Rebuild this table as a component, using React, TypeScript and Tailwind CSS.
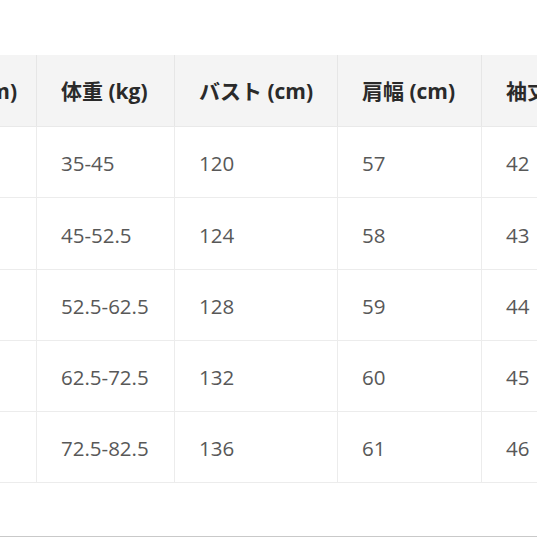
const headers = ["身長 (cm)", "体重 (kg)", "バスト (cm)", "肩幅 (cm)", "袖丈 (cm)"];

const rows = [
  ["150", "35-45", "120", "57", "42"],
  ["155", "45-52.5", "124", "58", "43"],
  ["160", "52.5-62.5", "128", "59", "44"],
  ["165", "62.5-72.5", "132", "60", "45"],
  ["170", "72.5-82.5", "136", "61", "46"],
];

const rowHeights = ["h-[71px]", "h-[72px]", "h-[71px]", "h-[71px]", "h-[71px]"];

const cols = "grid grid-cols-[137px_138px_163px_144px_160px]";

export default function App() {
  return (
    <div
      className="flex h-[537px] w-[537px] flex-col overflow-hidden bg-white"
      style={{ fontFamily: '"Open Sans", "Noto Sans CJK JP", sans-serif' }}
    >
      <div className="h-[55px] shrink-0" />
      <div className="-ml-[100px] w-[742px]">
        <div className={`${cols} h-[72px] border-b border-[#e9e9e9] bg-[#f4f4f4]`}>
          {headers.map((h) => (
            <div
              key={h}
              className="flex items-center border-r border-[#e6e6e6] pt-[3px] pl-6 text-[21px] font-bold text-[#2a2a2a] whitespace-nowrap"
            >
              {h}
            </div>
          ))}
        </div>
        {rows.map((r, i) => (
          <div
            key={i}
            className={`${cols} ${rowHeights[i]} border-b border-[#ececec]`}
          >
            {r.map((v, j) => (
              <div
                key={j}
                className="flex items-center border-r border-[#ececec] pt-[3px] pl-6 text-[20.5px] text-[#585858] whitespace-nowrap"
              >
                {v}
              </div>
            ))}
          </div>
        ))}
      </div>
      <div className="flex-1" />
      <div className="h-px shrink-0 bg-[#c9c9c9]" />
    </div>
  );
}
